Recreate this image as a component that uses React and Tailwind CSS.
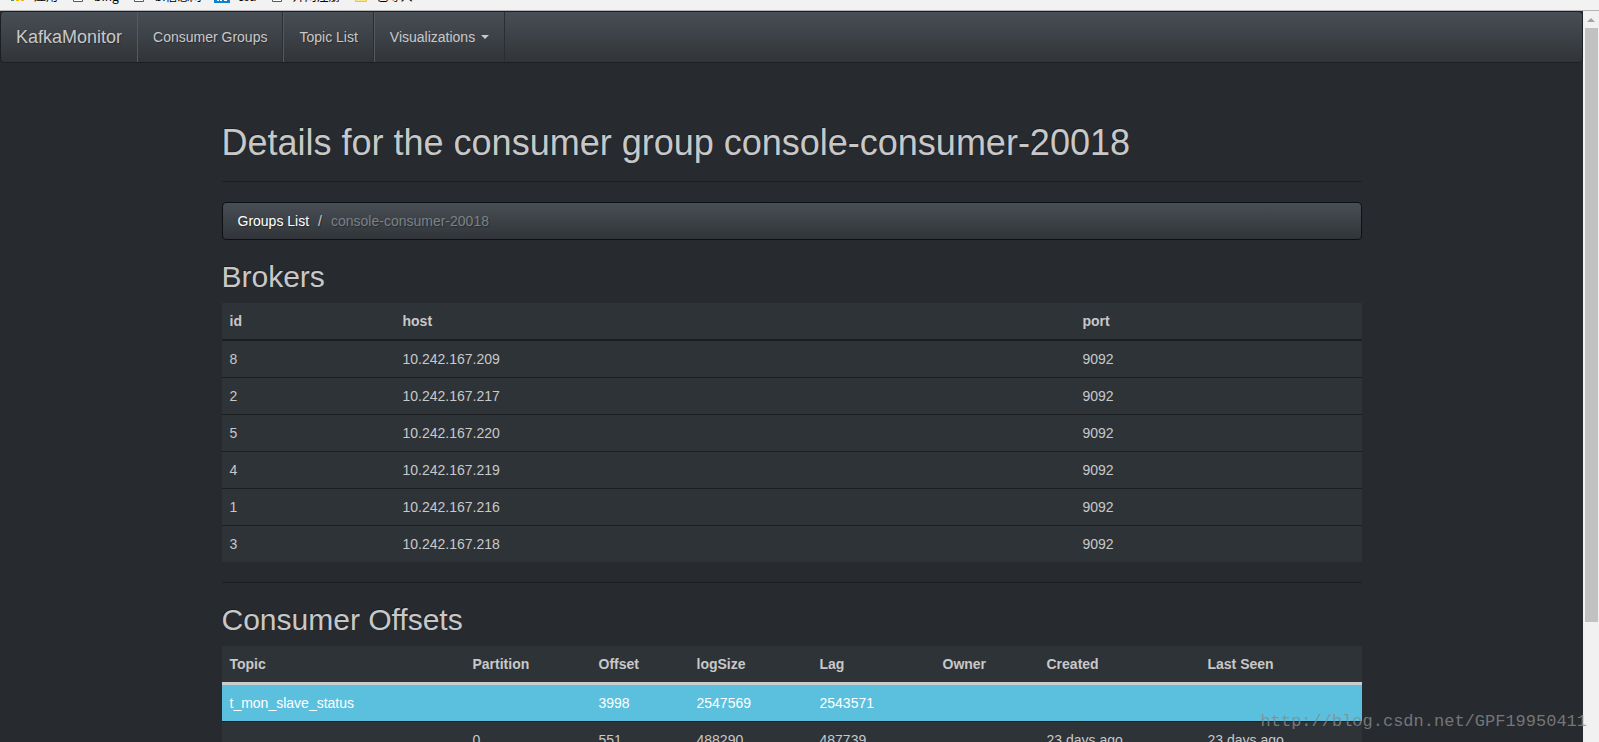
import React from 'react';

const bookmarks = [
  { label: '应用', icon: 'apps' },
  { label: 'bing', icon: 'page' },
  { label: 'bi信息网', icon: 'page' },
  { label: 'csu', icon: 'blue' },
  { label: '开网注册', icon: 'page' },
  { label: '已导入', icon: 'folder' },
];

const brokers = [
  { id: 8, host: '10.242.167.209', port: 9092 },
  { id: 2, host: '10.242.167.217', port: 9092 },
  { id: 5, host: '10.242.167.220', port: 9092 },
  { id: 4, host: '10.242.167.219', port: 9092 },
  { id: 1, host: '10.242.167.216', port: 9092 },
  { id: 3, host: '10.242.167.218', port: 9092 },
];

const offsetColumns = [
  { name: 'Topic', width: 'w-[243px]' },
  { name: 'Partition', width: 'w-[126px]' },
  { name: 'Offset', width: 'w-[98px]' },
  { name: 'logSize', width: 'w-[123px]' },
  { name: 'Lag', width: 'w-[123px]' },
  { name: 'Owner', width: 'w-[104px]' },
  { name: 'Created', width: 'w-[161px]' },
  { name: 'Last Seen', width: 'w-[162px]' },
];

function BookmarkIcon({ type }) {
  if (type === 'apps') {
    return (
      <svg className="h-4 w-4" viewBox="0 0 16 16" aria-hidden>
        <path d="M1 10h3v3H1z" fill="#2e9e5b" />
        <path d="M6 10h3v3H6zM11 10h3v3h-3z" fill="#f5b400" />
      </svg>
    );
  }
  if (type === 'blue') {
    return (
      <svg className="h-4 w-4" viewBox="0 0 16 16" aria-hidden>
        <path d="M0 0h16v15H0z" fill="#0a84d0" />
        <path d="M3 12.5h2M6 12.5h2M10 12.5h3" stroke="#fff" />
      </svg>
    );
  }
  if (type === 'folder') {
    return (
      <svg className="h-4 w-4" viewBox="0 0 16 16" aria-hidden>
        <path d="M2.5 2.5h11v11h-11z" fill="#fde48e" stroke="#eec14b" />
      </svg>
    );
  }
  return (
    <svg className="h-4 w-4" viewBox="0 0 16 16" aria-hidden>
      <path d="M3.5 1.5h9v12h-9z" fill="#fff" stroke="#5a5a5a" />
    </svg>
  );
}

// Bottom strip of the browser's bookmarks bar
function BookmarksBar() {
  return (
    <div className="flex h-[11px] shrink-0 items-end gap-3 overflow-hidden border-b border-[#b6b4b6] bg-[#f2f2f2] px-2.5 pb-1.5 font-['Noto_Sans_CJK_SC',sans-serif] text-xs leading-4 text-black">
      {bookmarks.map((b) => (
        <a key={b.label} href="#" className="flex items-center gap-2 whitespace-nowrap">
          <BookmarkIcon type={b.icon} />
          {b.label}
        </a>
      ))}
    </div>
  );
}

function Navbar() {
  const item = 'flex h-[50px] items-center border-r border-l border-r-[#2b2e31] border-l-[#555a5f] px-[15px]';
  return (
    <nav className="flex rounded border border-[#1c1e22] bg-linear-to-b from-[#484e55] via-[#3a3f44] via-60% to-[#313539] text-sm text-[#c8c8c8] text-shadow-[1px_1px_1px_rgba(0,0,0,0.3)]">
      <a href="#" className="flex h-[50px] items-center px-[15px] text-lg">KafkaMonitor</a>
      <a href="#" className={item}>Consumer Groups</a>
      <a href="#" className={item}>Topic List</a>
      <button type="button" className={`${item} gap-1.5`}>
        Visualizations
        <span className="border-x-4 border-t-4 border-x-transparent border-t-[#c8c8c8]" aria-hidden />
      </button>
    </nav>
  );
}

function BrokersTable() {
  return (
    <table className="w-full table-fixed bg-[#2e3338] text-left">
      <thead>
        <tr className="border-b-2 border-[#1c1e22]">
          <th className="w-[173px] p-2">id</th>
          <th className="w-[680px] p-2">host</th>
          <th className="w-[287px] p-2">port</th>
        </tr>
      </thead>
      <tbody>
        {brokers.map((b) => (
          <tr key={b.id} className="border-t border-[#1c1e22]">
            <td className="p-2">{b.id}</td>
            <td className="p-2">{b.host}</td>
            <td className="p-2">{b.port}</td>
          </tr>
        ))}
      </tbody>
    </table>
  );
}

function OffsetsTable() {
  return (
    <table className="w-full table-fixed bg-[#2e3338] text-left">
      <thead>
        <tr className="border-b-3 border-[#cccccc]">
          {offsetColumns.map((c) => (
            <th key={c.name} className={`${c.width} p-2`}>{c.name}</th>
          ))}
        </tr>
      </thead>
      <tbody>
        <tr className="bg-[#5bc0de] text-white">
          <td className="p-2" colSpan={2}>t_mon_slave_status</td>
          <td className="p-2">3998</td>
          <td className="p-2">2547569</td>
          <td className="p-2">2543571</td>
          <td className="p-2" colSpan={3} />
        </tr>
        <tr className="border-t border-[#1c1e22]">
          <td className="p-2" />
          <td className="p-2">0</td>
          <td className="p-2">551</td>
          <td className="p-2">488290</td>
          <td className="p-2">487739</td>
          <td className="p-2" />
          <td className="p-2">23 days ago</td>
          <td className="p-2">23 days ago</td>
        </tr>
      </tbody>
    </table>
  );
}

function Scrollbar() {
  return (
    <div className="flex w-4 shrink-0 flex-col items-center bg-[#f1f1f1]" aria-hidden>
      <div className="flex h-[17px] items-center justify-center">
        <span className="border-x-4 border-b-4 border-x-transparent border-b-[#a3a3a3]" />
      </div>
      <div className="h-[81.3%] w-[13px] bg-[#c1c1c1]" />
    </div>
  );
}

export default function App() {
  return (
    <div className="relative flex h-screen flex-col overflow-hidden bg-[#272b30] font-['Liberation_Sans',Arial,sans-serif] text-sm text-[#c8c8c8]">
      <BookmarksBar />
      <div className="flex min-h-0 flex-1">
        <div className="min-w-0 flex-1 overflow-hidden">
          <Navbar />
          <main className="mx-auto max-w-[1170px] px-[15px] pt-[60px]">
            <header className="border-b border-[#1c1e22] pb-[18px]">
              <h1 className="text-4xl leading-10 text-shadow-[-1px_-1px_0_rgba(0,0,0,0.3)]">
                Details for the consumer group console-consumer-20018
              </h1>
            </header>
            <ol className="mt-5 flex rounded border border-[#0e1011] bg-linear-to-b from-[#484e55] via-[#3a3f44] via-60% to-[#313539] px-[15px] py-2 text-shadow-[1px_1px_1px_rgba(0,0,0,0.3)]">
              <li><a href="#" className="text-white">Groups List</a></li>
              <li className="px-[9px]">/</li>
              <li className="text-[#7a8288]">console-consumer-20018</li>
            </ol>
            <h2 className="mt-5 mb-2.5 text-3xl leading-[33px] text-shadow-[-1px_-1px_0_rgba(0,0,0,0.3)]">Brokers</h2>
            <BrokersTable />
            <hr className="my-5 border-[#1c1e22]" />
            <h2 className="mb-2.5 text-3xl leading-[33px] text-shadow-[-1px_-1px_0_rgba(0,0,0,0.3)]">Consumer Offsets</h2>
            <OffsetsTable />
          </main>
        </div>
        <Scrollbar />
      </div>
      <p className="absolute right-3 bottom-2 font-['Liberation_Mono',monospace] text-[17px] leading-6 text-[#8a8a8a]/80">
        http://blog.csdn.net/GPF19950411
      </p>
    </div>
  );
}
